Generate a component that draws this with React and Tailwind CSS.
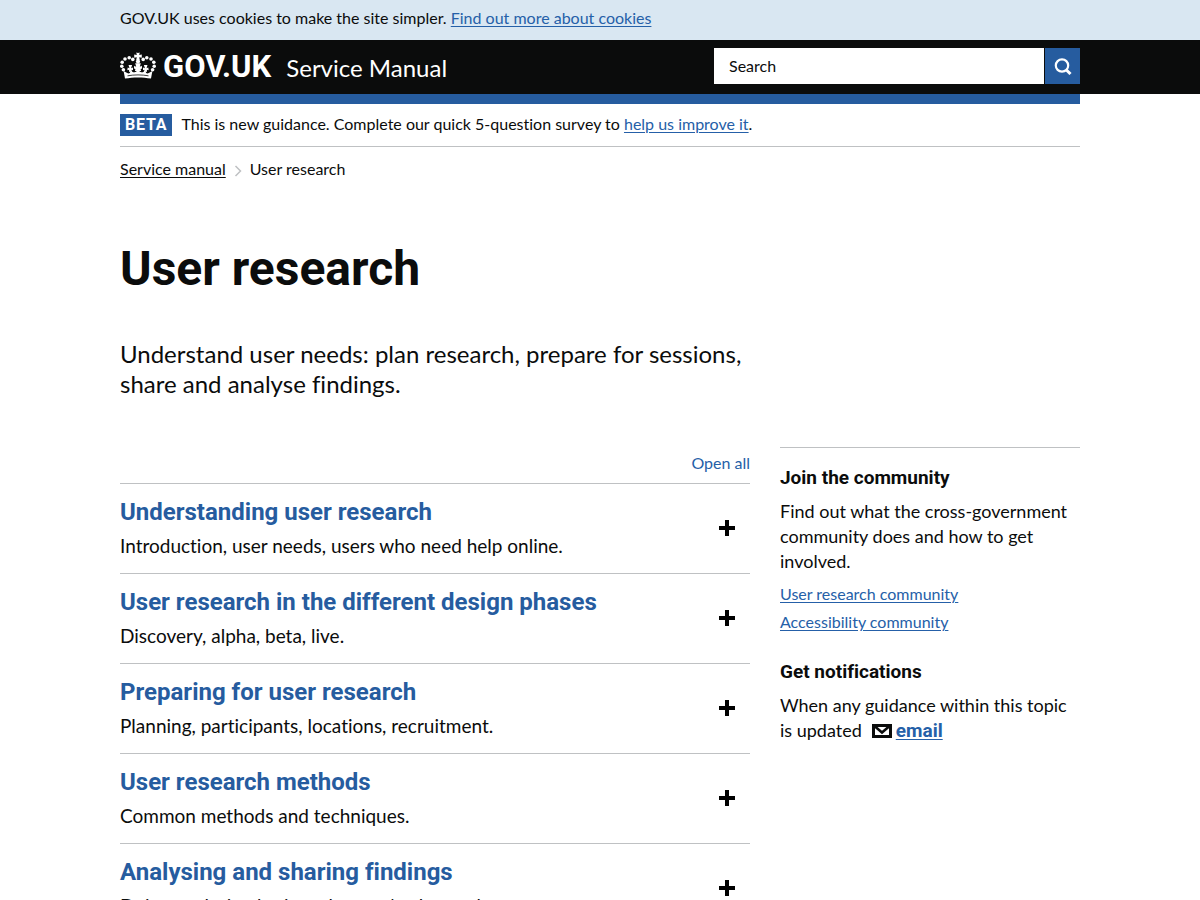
import React, { useState } from 'react';

const sections = [
  { title: 'Understanding user research', description: 'Introduction, user needs, users who need help online.' },
  { title: 'User research in the different design phases', description: 'Discovery, alpha, beta, live.' },
  { title: 'Preparing for user research', description: 'Planning, participants, locations, recruitment.' },
  { title: 'User research methods', description: 'Common methods and techniques.' },
  { title: 'Analysing and sharing findings', description: "Doing analysis, sharing what you've learned." },
];

const pearls = [
  [12.8, 7.4], [9.2, 5.8], [5, 7], [2.2, 10.2], [1.8, 14.2], [3.4, 17.8],
  [23.2, 7.4], [26.8, 5.8], [31, 7], [33.8, 10.2], [34.2, 14.2], [32.6, 17.8],
];

const Crown = () => (
  <svg viewBox="0 0 36 28" className="h-7 w-9" fill="currentColor" aria-hidden="true">
    {/* Cross and orb */}
    <path d="M16.300.4 18 1l1.700-.6-.5 2.600 2.600-.6v3.400l-2.600-.5.6 2.700h-3.600l.6-2.700-2.600.5V2.400l2.600.6z" />
    <circle cx="18" cy="9.600" r="2.100" />
    {pearls.map(([cx, cy]) => (
      <circle key={`${cx}-${cy}`} cx={cx} cy={cy} r="1.800" />
    ))}
    {/* Body */}
    <path d="M5 26.500 3.600 19l3.600 2c1.600.9 3 .2 3.100-1.500l-1.300.6.100-2.400-1.800.5.400-2.800 1.800.8-1-3.200h3.600l-1 3.200 1.900-.8v2.800l-1.500-.5c.2 2.600 3 3.700 5.200 1.200l-1.800.2.500-2.100-1.500-.4.300-2.800 2 1-1-3.600h5.600l-1 3.600 2-1 .3 2.800-1.500.4.500 2.100-1.800-.2c2.200 2.500 5 1.400 5.200-1.200l-1.500.5v-2.800l1.900.8-1-3.200h3.600l-1 3.200 1.800-.8.4 2.800-1.800-.5.100 2.400-1.300-.6c.1 1.700 1.500 2.400 3.100 1.500l3.600-2L31 26.500c-8-1.500-18-1.500-26 0z" />
    <path d="M7.500 23.800c7-1.200 14-1.200 21 0" fill="none" stroke="#0b0c0c" strokeWidth=".8" />
  </svg>
);

const PlusIcon = () => (
  <svg viewBox="0 0 16 16" className="mr-[15px] size-4 shrink-0 text-black" fill="currentColor" aria-hidden="true">
    <path d="M6 0h4v6h6v4h-6v6H6v-6H0V6h6z" />
  </svg>
);

const EmailIcon = () => (
  <svg viewBox="0 0 20 14" className="h-[14px] w-5" aria-hidden="true">
    <path d="M1.500 1.500h17v11h-17z" fill="none" stroke="currentColor" strokeWidth="3" />
    <path d="M3 2.500 10 8.500l7-6" fill="none" stroke="currentColor" strokeWidth="2.500" />
  </svg>
);

const App = () => {
  const [query, setQuery] = useState('');
  const [open, setOpen] = useState([]);
  const allOpen = open.length === sections.length;

  const toggle = (title) => {
    setOpen(open.includes(title) ? open.filter((t) => t !== title) : [...open, title]);
  };

  return (
    <div className="min-h-screen overflow-x-hidden bg-white font-[Lato,'Liberation_Sans',sans-serif] text-base leading-5 text-[#0b0c0c] [font-variant-ligatures:no-common-ligatures]">
      {/* Cookie message */}
      <div className="bg-[#d9e7f2]">
        <p className="mx-auto max-w-[1020px] px-[30px] pt-2 pb-3">
          GOV.UK uses cookies to make the site simpler.{' '}
          <a href="#cookies" className="text-[#2560a8] underline underline-offset-2">Find out more about cookies</a>
        </p>
      </div>

      {/* Header */}
      <header className="bg-[#0b0c0c] text-white">
        <div className="mx-auto flex max-w-[1020px] items-center justify-between gap-4 px-[30px] pt-2 pb-[10px]">
          <div className="flex items-center gap-[15px]">
            <a href="#home" className="flex items-center gap-[7px] font-[Roboto,sans-serif] text-[31px] leading-9 font-bold">
              <Crown />
              <span className="pt-[2px] leading-[34px]">GOV.UK</span>
            </a>
            <a href="#manual" className="pt-1 text-2xl">Service Manual</a>
          </div>
          <form className="flex w-[366px] gap-px" onSubmit={(e) => e.preventDefault()}>
            <input
              type="search"
              aria-label="Search"
              placeholder="Search"
              value={query}
              onChange={(e) => setQuery(e.target.value)}
              className="h-9 min-w-0 flex-1 bg-white px-[15px] pb-[2px] text-[#0b0c0c] placeholder:text-[#0b0c0c]"
            />
            <button type="submit" aria-label="Submit search" className="flex h-9 w-[35px] items-center justify-center bg-[#265c9f]">
              <svg viewBox="0 0 18 18" className="size-[18px]" fill="none" stroke="currentColor" aria-hidden="true">
                <circle cx="8" cy="8.500" r="6.200" strokeWidth="2.200" />
                <path d="m12.200 12.700 4.300 4.300" strokeWidth="3" />
              </svg>
            </button>
          </form>
        </div>
      </header>

      <div className="mx-auto max-w-[1020px] px-[30px]">
        <div className="h-[10px] bg-[#265c9f]"></div>

        {/* Phase banner */}
        <div className="flex items-center gap-[9px] border-b border-[#bfc1c3] py-[10px]">
          <strong className="bg-[#265c9f] px-[5px] py-px font-[Roboto,sans-serif] tracking-wider text-white">BETA</strong>
          <p className="pb-[2px]">
            This is new guidance. Complete our quick 5-question survey to{' '}
            <a href="#survey" className="text-[#2560a8] underline underline-offset-2">help us improve it</a>.
          </p>
        </div>

        {/* Breadcrumbs */}
        <nav aria-label="Breadcrumb" className="pt-3">
          <ol className="flex items-center">
            <li><a href="#manual" className="underline underline-offset-2">Service manual</a></li>
            <li className="flex items-center">
              <svg viewBox="0 0 8 12" className="mx-2 mt-1 h-3 w-2" fill="none" stroke="#bfc1c3" strokeWidth="1.500" aria-hidden="true">
                <path d="m1.500 1 5 5-5 5" />
              </svg>
              User research
            </li>
          </ol>
        </nav>

        <main>
          <h1 className="mt-[65px] font-[Roboto,sans-serif] text-5xl leading-[50px] font-bold">User research</h1>
          <p className="mt-[45px] max-w-[630px] text-2xl leading-[30px]">
            Understand user needs: plan research, prepare for sessions, share and analyse findings.
          </p>

          <div className="mt-12 grid grid-cols-1 gap-[30px] md:grid-cols-[minmax(0,630fr)_minmax(0,300fr)]">
            {/* Sections */}
            <div>
              <div className="flex justify-end pt-[6px] pb-[10px]">
                <button type="button" className="text-[#2560a8]" onClick={() => setOpen(allOpen ? [] : sections.map((s) => s.title))}>
                  {allOpen ? 'Close all' : 'Open all'}
                </button>
              </div>
              {sections.map((section) => (
                <button
                  key={section.title}
                  type="button"
                  aria-expanded={open.includes(section.title)}
                  onClick={() => toggle(section.title)}
                  className="flex w-full items-center justify-between border-t border-[#bfc1c3] pt-[13px] pb-[14px] text-left"
                >
                  <span>
                    <span className="block font-[Roboto,sans-serif] text-2xl leading-[30px] font-bold text-[#265c9f]">{section.title}</span>
                    <span className="block pt-[6px] pb-px text-[19px] leading-[25px]">{section.description}</span>
                  </span>
                  <PlusIcon />
                </button>
              ))}
            </div>

            {/* Related */}
            <aside className="self-start border-t border-[#bfc1c3] pt-[17px] text-lg leading-[25px]">
              <h2 className="font-[Roboto,sans-serif] text-[19px] leading-[25px] font-bold">Join the community</h2>
              <p className="mt-[9px]">Find out what the cross-government community does and how to get involved.</p>
              <ul className="mt-[10px] space-y-2 text-base leading-5 text-[#2560a8]">
                <li><a href="#research" className="underline underline-offset-2">User research community</a></li>
                <li><a href="#accessibility" className="underline underline-offset-2">Accessibility community</a></li>
              </ul>
              <h2 className="mt-[27px] font-[Roboto,sans-serif] text-[19px] leading-[25px] font-bold">Get notifications</h2>
              <div className="mt-[9px]">
                <p>When any guidance within this topic</p>
                <p className="flex items-center">
                  is updated
                  <span className="mr-1 ml-[10px]"><EmailIcon /></span>
                  <a href="#email" className="font-[Roboto,sans-serif] text-[19px] font-bold text-[#2560a8] underline underline-offset-2">email</a>
                </p>
              </div>
            </aside>
          </div>
        </main>
      </div>
    </div>
  );
};

export default App;
